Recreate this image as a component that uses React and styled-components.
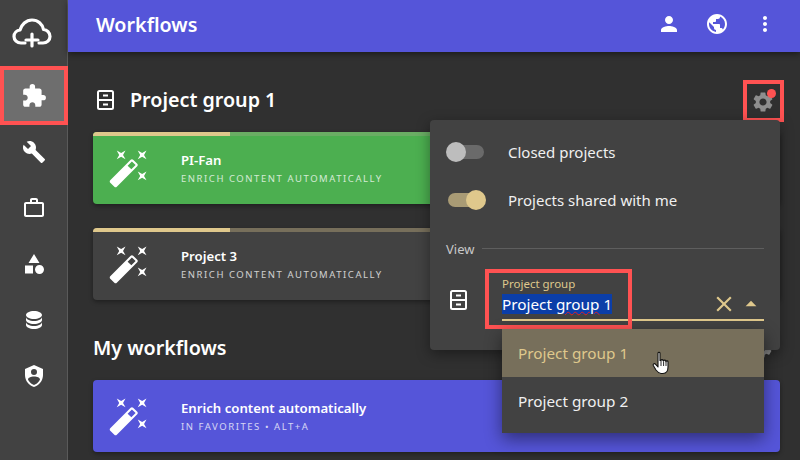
import styled, { createGlobalStyle } from 'styled-components';
import { MdPerson, MdPublic, MdMoreVert, MdExtension, MdBuild, MdWorkOutline, MdSettings, MdClose, MdArrowDropUp } from 'react-icons/md';

const GlobalStyle = createGlobalStyle`
    html, body {
        margin: 0;
        padding: 0;
        width: 800px;
        height: 460px;
        overflow: hidden;
        background: #303030;
        font-family: "Noto Sans", "Open Sans", sans-serif;
    }
`;

const Page = styled.div`
    display: flex;
    width: 800px;
    height: 460px;
    overflow: hidden;
`;

const Sidebar = styled.nav`
    width: 67px;
    flex-shrink: 0;
    background: #424242;
    border-right: 1px solid #5a5a5a;
    display: flex;
    flex-direction: column;
`;

const Logo = styled.div`
    height: 66px;
    display: flex;
    align-items: center;
    justify-content: center;
    color: #fff;
    padding-right: 3px;
`;

const NavItem = styled.div`
    height: 56px;
    display: flex;
    align-items: center;
    justify-content: center;
    color: #fff;
    font-size: 24px;
    box-sizing: border-box;
    ${(p) => p.$active && `
        height: 59px;
        width: 68px;
        margin-bottom: -1px;
        background: #6e6e6e;
        border: 4px solid #ff5252;
        font-size: 26px;
    `}
`;

const Main = styled.div`
    flex: 1;
    position: relative;
    display: flex;
    flex-direction: column;
    min-width: 0;
`;

const Header = styled.header`
    height: 52px;
    flex-shrink: 0;
    background: #5555d9;
    box-shadow: 0 2px 6px rgba(0, 0, 0, 0.45);
    display: flex;
    align-items: center;
    padding: 0 23px 4px 28px;
    box-sizing: border-box;
    color: #fff;
    position: relative;
    z-index: 1;
`;

const Title = styled.h1`
    flex: 1;
    margin: 0;
    font-size: 19.7px;
    font-weight: 600;
`;

const HeaderIcons = styled.div`
    display: flex;
    align-items: center;
    gap: 24px;
    font-size: 24px;
    line-height: 0;
`;

const Content = styled.main`
    padding: 28px 20px 0 25px;
`;

const SectionHead = styled.div`
    height: 40px;
    display: flex;
    align-items: center;
    color: #fff;
    gap: 16px;
    margin-bottom: 12px;
`;

const GroupHead = styled(SectionHead)`
    padding-left: 4px;
`;

const FavoritesHead = styled(SectionHead)`
    margin-top: 28px;
`;

const SectionTitle = styled.h2`
    flex: 1;
    margin: -2px 0 0;
    font-size: 19.7px;
    font-weight: 600;
`;

const GearBox = styled.div`
    position: relative;
    width: 41px;
    height: 42px;
    box-sizing: border-box;
    border: 4px solid #ff5252;
    display: flex;
    align-items: center;
    justify-content: center;
    color: #8e8e8e;
    font-size: 24px;
    padding: 2px 2px 0 0;
    margin-top: 2px;
    margin-right: -4px;
`;

const Dot = styled.span`
    position: absolute;
    top: 5px;
    right: 4px;
    width: 9px;
    height: 9px;
    border-radius: 50%;
    background: #ff5252;
`;

const Card = styled.div`
    position: relative;
    height: 72px;
    box-sizing: border-box;
    padding-left: 15px;
    margin-bottom: 24px;
    border-radius: 4px;
    overflow: hidden;
    display: flex;
    align-items: center;
    gap: 31px;
    color: #fff;
    background: ${(p) => p.$bg};
    box-shadow: 0 2px 4px rgba(0, 0, 0, 0.35);
`;

const Progress = styled.div`
    position: absolute;
    top: 0;
    left: 0;
    right: 0;
    height: 4px;
    background: ${(p) => p.$track};
`;

const ProgressFill = styled.div`
    width: 137px;
    height: 100%;
    background: #dfc88c;
`;

const CardText = styled.div`
    display: flex;
    flex-direction: column;
    gap: 3px;
    margin-top: 1px;
`;

const CardName = styled.div`
    font-size: 13.2px;
    font-weight: 600;
    line-height: 18px;
`;

const CardSub = styled.div`
    font-size: 9.5px;
    letter-spacing: 1.55px;
    line-height: 14px;
    opacity: 0.75;
    text-transform: uppercase;
`;

const HeadAction = styled.div`
    color: #a0a0a0;
    font-size: 24px;
    line-height: 0;
    margin-right: 6px;
`;

const Popover = styled.div`
    position: absolute;
    left: 362px;
    top: 120px;
    width: 350px;
    height: 230px;
    box-sizing: border-box;
    padding: 8px 16px 0;
    background: #424242;
    border-radius: 4px;
    box-shadow: 0 4px 14px rgba(0, 0, 0, 0.4);
    color: #f0f0f0;
    z-index: 2;
`;

const ToggleRow = styled.div`
    height: 48px;
    display: flex;
    align-items: center;
    gap: 24px;
    font-size: 15px;
`;

const Track = styled.div`
    position: relative;
    width: 36px;
    height: 14px;
    margin-left: 2px;
    border-radius: 7px;
    background: ${(p) => (p.$on ? '#a99b75' : '#6a6a6a')};
`;

const Thumb = styled.div`
    position: absolute;
    top: -3px;
    left: ${(p) => (p.$on ? '18px' : '-2px')};
    width: 20px;
    height: 20px;
    border-radius: 50%;
    background: ${(p) => (p.$on ? '#dfc88c' : '#bdbdbd')};
`;

const ViewHead = styled.div`
    display: flex;
    align-items: center;
    gap: 8px;
    font-size: 13px;
    height: 20px;
    margin-top: 15px;
    color: #c8c8c8;
`;

const Rule = styled.div`
    flex: 1;
    height: 1px;
    margin-top: -2px;
    background: #5e5e5e;
`;

const FieldRow = styled.div`
    display: flex;
    align-items: center;
    margin-top: 12px;
    position: relative;
`;

const FieldIcon = styled.div`
    width: 52px;
    flex-shrink: 0;
    color: #fff;
    padding-left: 4px;
    line-height: 0;
    margin-top: 8px;
`;

const Field = styled.div`
    flex: 1;
    position: relative;
    border-bottom: 2px solid #dfc88c;
    height: 50px;
    box-sizing: border-box;
    padding-top: 6px;
`;

const FieldLabel = styled.div`
    font-size: 11.5px;
    line-height: 14px;
    color: #dfc88c;
`;

const FieldValue = styled.div`
    display: flex;
    align-items: center;
    height: 20px;
    margin-top: 3px;
    font-size: 15.3px;
`;

const Selected = styled.span`
    background: #0b3ea8;
    color: #fff;
    line-height: 20px;
`;

const Wavy = styled.span`
    text-decoration: underline wavy #e02020 1px;
`;

const FieldActions = styled.div`
    position: absolute;
    right: 0;
    bottom: 2px;
    display: flex;
    align-items: center;
    gap: 1px;
    color: #dfc88c;
    line-height: 0;
`;

const RedBox = styled.div`
    position: absolute;
    left: 39px;
    top: -2px;
    width: 147px;
    height: 60px;
    box-sizing: border-box;
    border: 4px solid #ff5252;
    pointer-events: none;
`;

const Menu = styled.div`
    position: absolute;
    left: 72px;
    top: 209px;
    width: 262px;
    padding-bottom: 8px;
    background: #424242;
    box-shadow: 0 6px 16px rgba(0, 0, 0, 0.45);
    z-index: 3;
`;

const MenuItem = styled.div`
    position: relative;
    height: 48px;
    display: flex;
    align-items: center;
    padding-left: 16px;
    font-size: 15.3px;
    color: ${(p) => (p.$active ? '#dfc88c' : '#f0f0f0')};
    background: ${(p) => (p.$active ? '#776f5b' : 'transparent')};
`;

const Hand = styled.svg`
    position: absolute;
    left: 150px;
    top: 22px;
`;

const wand = 'M7.5,5.6L5,7L6.4,4.5L5,2L7.5,3.4L10,2L8.6,4.5L10,7L7.5,5.6M19.5,15.4L22,14L20.6,16.5L22,19L19.5,17.6L17,19L18.4,16.5L17,14L19.5,15.4M22,2L20.6,4.5L22,7L19.5,5.6L17,7L18.4,4.5L17,2L19.5,3.4L22,2M13.34,12.78L15.78,10.34L13.66,8.22L11.22,10.66L13.34,12.78M14.37,7.29L16.71,9.63C17.1,10 17.1,10.65 16.71,11.04L5.04,22.71C4.65,23.1 4,23.1 3.63,22.71L1.29,20.37C0.9,20 0.9,19.35 1.29,18.96L12.96,7.29C13.35,6.9 14,6.9 14.37,7.29Z';
const shape = 'M11,13.5V21.5H3V13.5H11M12,2L17.5,11H6.5L12,2M17.5,13C20,13 22,15 22,17.5C22,20 20,22 17.5,22C15,22 13,20 13,17.5C13,15 15,13 17.5,13Z';
const database = 'M12,3C7.58,3 4,4.79 4,7C4,9.21 7.58,11 12,11C16.42,11 20,9.21 20,7C20,4.79 16.42,3 12,3M4,9V12C4,14.21 7.58,16 12,16C16.42,16 20,14.21 20,12V9C20,11.21 16.42,13 12,13C7.58,13 4,11.21 4,9M4,14V17C4,19.21 7.58,21 12,21C16.42,21 20,19.21 20,17V14C20,16.21 16.42,18 12,18C7.58,18 4,16.21 4,14Z';
const shield = 'M12,1L3,5V11C3,16.55 6.84,21.74 12,23C17.16,21.74 21,16.55 21,11V5L12,1M12,5A3,3 0 0,1 15,8A3,3 0 0,1 12,11A3,3 0 0,1 9,8A3,3 0 0,1 12,5M17.13,17C15.92,18.85 14.11,20.24 12,20.92C9.89,20.24 8.08,18.85 6.87,17C6.53,16.5 6.24,16 6,15.47C6,13.82 8.71,12.47 12,12.47C15.29,12.47 18,13.79 18,15.47C17.76,16 17.47,16.5 17.13,17Z';

function PathIcon({ d, size = 24 }) {
    return (
        <svg width={size} height={size} viewBox={'0 0 24 24'} fill={'currentColor'}>
            <path d={d} />
        </svg>
    );
}

function CloudIcon() {
    return (
        <svg width={40} height={30} viewBox={'0 0 40 30'} fill={'none'} stroke={'currentColor'} strokeWidth={3.2} strokeLinecap={'round'} strokeLinejoin={'round'}>
            <path d={'M13 25H9C5 25 2 22 2 18.5C2 15 4.8 12.4 8 12C9.5 6.5 14 2 20 2C26 2 30.5 6 31.5 11.5C35 11.8 38 14.7 38 18.5C38 22 35 25 31 25H27'} />
            <path d={'M20 16V28M14 22H26'} />
        </svg>
    );
}

function CabinetIcon() {
    return (
        <svg width={17} height={20} viewBox={'0 0 17 20'} fill={'none'} stroke={'currentColor'} strokeWidth={2}>
            <rect x={1} y={1} width={15} height={18} rx={1.5} />
            <path d={'M1 10H16M6 5.5H11M6 14.5H11'} />
        </svg>
    );
}

function WorkflowCard({ name, sub, bg, track }) {
    return (
        <Card $bg={bg}>
            {track && (
                <Progress $track={track}>
                    <ProgressFill />
                </Progress>
            )}
            <PathIcon d={wand} size={42} />
            <CardText>
                <CardName>{name}</CardName>
                <CardSub>{sub}</CardSub>
            </CardText>
        </Card>
    );
}

export default function App() {
    return (
        <Page>
            <GlobalStyle />
            <Sidebar>
                <Logo><CloudIcon /></Logo>
                <NavItem $active><MdExtension /></NavItem>
                <NavItem><MdBuild /></NavItem>
                <NavItem><MdWorkOutline /></NavItem>
                <NavItem><PathIcon d={shape} /></NavItem>
                <NavItem><PathIcon d={database} /></NavItem>
                <NavItem><PathIcon d={shield} /></NavItem>
            </Sidebar>
            <Main>
                <Header>
                    <Title>Workflows</Title>
                    <HeaderIcons>
                        <MdPerson />
                        <MdPublic />
                        <MdMoreVert />
                    </HeaderIcons>
                </Header>
                <Content>
                    <GroupHead>
                        <CabinetIcon />
                        <SectionTitle>Project group 1</SectionTitle>
                        <GearBox>
                            <MdSettings />
                            <Dot />
                        </GearBox>
                    </GroupHead>
                    <WorkflowCard name={'PI-Fan'} sub={'Enrich content automatically'} bg={'#4caf50'} track={'#6aad64'} />
                    <WorkflowCard name={'Project 3'} sub={'Enrich content automatically'} bg={'#424242'} track={'#776f5b'} />
                    <FavoritesHead>
                        <SectionTitle>My workflows</SectionTitle>
                        <HeadAction><MdSettings /></HeadAction>
                    </FavoritesHead>
                    <WorkflowCard name={'Enrich content automatically'} sub={'In favorites • Alt+A'} bg={'#5555d9'} />
                </Content>
                <Popover>
                    <ToggleRow>
                        <Track><Thumb /></Track>
                        <span>Closed projects</span>
                    </ToggleRow>
                    <ToggleRow>
                        <Track $on><Thumb $on /></Track>
                        <span>Projects shared with me</span>
                    </ToggleRow>
                    <ViewHead>View<Rule /></ViewHead>
                    <FieldRow>
                        <FieldIcon><CabinetIcon /></FieldIcon>
                        <Field>
                            <FieldLabel>Project group</FieldLabel>
                            <FieldValue>
                                <Selected>Project <Wavy>group</Wavy> 1</Selected>
                            </FieldValue>
                            <FieldActions>
                                <MdClose size={26} />
                                <MdArrowDropUp size={26} />
                            </FieldActions>
                        </Field>
                        <RedBox />
                    </FieldRow>
                    <Menu>
                        <MenuItem $active>
                            Project group 1
                            <Hand width={18} height={24} viewBox={'0 0 18 24'}>
                                <path d={'M6 2.2C6 1 8 1 8 2.2V9.5L9 9.5C9 8.3 11 8.3 11 9.5L11.6 10C11.6 8.8 13.6 8.8 13.6 10L14 10.7C14 9.6 16 9.6 16 10.7V16C16 19 14.5 22.5 11 22.5H9C6.5 22.5 5.5 21 4 19L1.3 14.5C0.6 13.2 2.3 12 3.4 13.2L6 16Z'} fill={'#fff'} stroke={'#111'} strokeWidth={1.1} strokeLinejoin={'round'} />
                                <path d={'M9 10V15M11.6 10.5V15M14 11V15'} stroke={'#111'} strokeWidth={0.9} fill={'none'} />
                            </Hand>
                        </MenuItem>
                        <MenuItem>Project group 2</MenuItem>
                    </Menu>
                </Popover>
            </Main>
        </Page>
    );
}
